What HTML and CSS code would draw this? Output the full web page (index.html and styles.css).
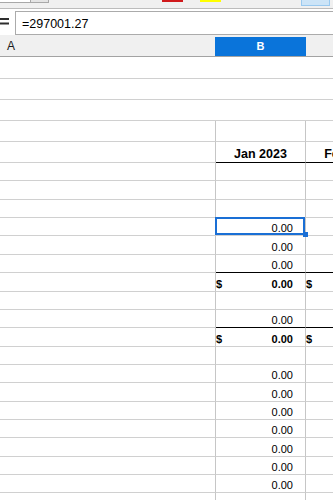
FILE: index.html
```html
<!DOCTYPE html>
<html>
<head>
<meta charset="utf-8">
<link rel="stylesheet" href="styles.css">
</head>
<body>
<div class="app">
  <div class="toolbar">
    <div class="combo"><span class="combo-field"></span><span class="combo-btn"></span></div>
    <span class="swatch red"></span>
    <span class="swatch yellow"></span>
    <span class="tb-btn"></span>
  </div>
  <div class="formula-bar">
    <svg class="eq" width="9" height="7" viewBox="0 0 9 7"><rect x="0" y="0" width="9" height="2" fill="#2e2e2e"/><rect x="0" y="4.5" width="9" height="2" fill="#2e2e2e"/></svg>
    <div class="formula-input">=297001.27</div>
  </div>
  <div class="col-headers">
    <div class="ch ch-a">A</div>
    <div class="ch ch-b">B</div>
    <div class="ch ch-c"></div>
  </div>
  <div class="grid">
    <div class="row h22"><div class="cell full"></div></div>
    <div class="row h21"><div class="cell full"></div></div>
    <div class="row h21"><div class="cell full"></div></div>
    <div class="row h21"><div class="cell ca"></div><div class="cell cb"></div><div class="cell cc"></div></div>
    <div class="row h21"><div class="cell ca"></div><div class="cell cb title thick">Jan 2023</div><div class="cell cc title thick">Feb 2023</div></div>
    <div class="row h18"><div class="cell ca"></div><div class="cell cb"></div><div class="cell cc"></div></div>
    <div class="row h19"><div class="cell ca"></div><div class="cell cb"></div><div class="cell cc"></div></div>
    <div class="row h18"><div class="cell ca"></div><div class="cell cb"></div><div class="cell cc"></div></div>
    <div class="row h18"><div class="cell ca"></div><div class="cell cb sel"><span class="num">0.00</span></div><div class="cell cc"></div></div>
    <div class="row h19"><div class="cell ca"></div><div class="cell cb"><span class="num">0.00</span></div><div class="cell cc"></div></div>
    <div class="row h18"><div class="cell ca"></div><div class="cell cb thick"><span class="num">0.00</span></div><div class="cell cc thick"></div></div>
    <div class="row h19"><div class="cell ca"></div><div class="cell cb bold"><span>$</span><span class="num">0.00</span></div><div class="cell cc bold"><span>$</span></div></div>
    <div class="row h18"><div class="cell ca"></div><div class="cell cb"></div><div class="cell cc"></div></div>
    <div class="row h18"><div class="cell ca"></div><div class="cell cb thick"><span class="num">0.00</span></div><div class="cell cc thick"></div></div>
    <div class="row h19"><div class="cell ca"></div><div class="cell cb bold"><span>$</span><span class="num">0.00</span></div><div class="cell cc bold"><span>$</span></div></div>
    <div class="row h18"><div class="cell ca"></div><div class="cell cb"></div><div class="cell cc"></div></div>
    <div class="row h18"><div class="cell ca"></div><div class="cell cb"><span class="num">0.00</span></div><div class="cell cc"></div></div>
    <div class="row h19"><div class="cell ca"></div><div class="cell cb"><span class="num">0.00</span></div><div class="cell cc"></div></div>
    <div class="row h18"><div class="cell ca"></div><div class="cell cb"><span class="num">0.00</span></div><div class="cell cc"></div></div>
    <div class="row h18"><div class="cell ca"></div><div class="cell cb"><span class="num">0.00</span></div><div class="cell cc"></div></div>
    <div class="row h19"><div class="cell ca"></div><div class="cell cb"><span class="num">0.00</span></div><div class="cell cc"></div></div>
    <div class="row h18"><div class="cell ca"></div><div class="cell cb"><span class="num">0.00</span></div><div class="cell cc"></div></div>
    <div class="row h18"><div class="cell ca"></div><div class="cell cb"><span class="num">0.00</span></div><div class="cell cc"></div></div>
    <div class="row h18"><div class="cell ca"></div><div class="cell cb"></div><div class="cell cc"></div></div>
  </div>
</div>
</body>
</html>
```

FILE: styles.css
```css
* { box-sizing: border-box; }
html, body {
  margin: 0;
  width: 333px;
  height: 500px;
  overflow: hidden;
  background: #fff;
  font-family: "Liberation Sans", Arial, sans-serif;
  color: #000;
}
.app { width: 333px; overflow: hidden; }

/* toolbar remnant */
.toolbar {
  display: flex;
  align-items: flex-start;
  height: 9px;
  background: #f0f0f0;
  border-bottom: 1px solid #bcbcbc;
}
.combo { display: flex; flex: none; width: 49px; }
.combo-field {
  width: 31px; height: 3px;
  background: #fff;
  border-bottom: 1px solid #a8a8a8;
  border-right: 1px solid #a8a8a8;
}
.combo-btn {
  width: 18px; height: 3px;
  background: #e4e4e4;
  border-bottom: 1px solid #a8a8a8;
  border-right: 1px solid #a8a8a8;
}
.swatch { flex: none; width: 21px; height: 2px; }
.red { margin-left: 113px; background: #d0191c; }
.yellow { margin-left: 17px; background: #ffff00; }
.tb-btn {
  flex: none;
  margin-left: 80px;
  width: 29px; height: 6px;
  background: #cce4f7;
  border: 1px solid #99c9ef;
  border-top: none;
}

/* formula bar */
.formula-bar {
  display: flex;
  align-items: flex-start;
  padding-top: 2px;
  background: #fff;
}
.eq { flex: none; margin-top: 7px; display: block; }
.formula-input {
  flex: 1;
  margin-left: 6px;
  height: 24px;
  border: 1px solid #ababab;
  border-right: none;
  padding: 2px 0 0 6px;
  font-size: 12.5px;
  line-height: 20px;
  background: #fff;
}

/* column headers */
.col-headers {
  display: flex;
  height: 22px;
  padding-top: 2px;
  background: #f0f0f0;
  border-bottom: 1px solid #a3a3a3;
}
.ch { flex: none; height: 19px; font-size: 12px; line-height: 19px; }
.ch-a { width: 215px; padding-left: 7px; color: #1a1a1a; }
.ch-b {
  width: 91px;
  background: #0a74da;
  color: #fff;
  font-weight: bold;
  font-size: 11px;
  text-align: center;
}
.ch-c { flex: 1; }

/* grid */
.grid { width: 396px; }
.row { display: flex; }
.h22 { height: 22px; }
.h21 { height: 21px; }
.h19 { height: 19px; }
.h18 { height: 18px; }
.cell {
  flex: none;
  height: 100%;
  display: flex;
  align-items: flex-end;
  border-bottom: 1px solid #d0d0d0;
  padding-bottom: 1px;
  font-size: 11px;
  line-height: 12px;
  white-space: nowrap;
}
.full { width: 396px; }
.ca { width: 216px; border-right: 1px solid #c6c6c6; }
.cb { width: 90px; border-right: 1px solid #c6c6c6; padding-right: 12px; }
.cc { width: 90px; padding-right: 12px; }
.num { margin-left: auto; }
.bold { font-weight: bold; }
.thick { border-bottom-color: #000; }
.title {
  justify-content: center;
  padding-right: 0;
  font-weight: bold;
  font-size: 12.5px;
  line-height: 14px;
}

/* selected cell */
.sel { position: relative; }
.sel::before {
  content: "";
  position: absolute;
  left: -1px; top: -1px; right: 0; bottom: 0;
  border: 2px solid #1a6fd5;
}
.sel::after {
  content: "";
  position: absolute;
  right: -3px; bottom: -2px;
  width: 5px; height: 5px;
  background: #1a6fd5;
}
```
